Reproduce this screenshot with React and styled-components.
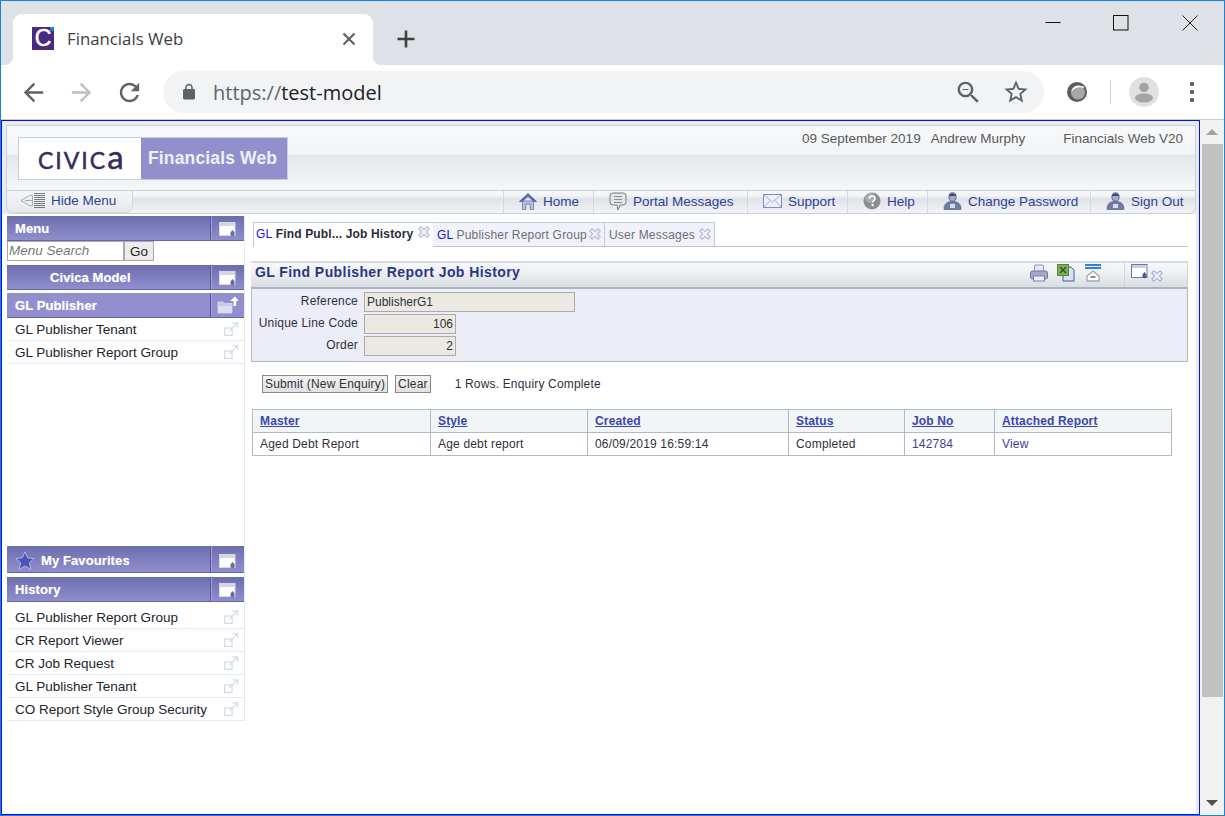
import React from "react";
import styled, { createGlobalStyle } from "styled-components";

const GlobalStyle = createGlobalStyle`
  html, body { margin: 0; padding: 0; background: #fff; }
  body { font-family: "Liberation Sans", Arial, sans-serif; overflow: hidden; }
  * { box-sizing: border-box; }
`;

const Frame = styled.div`
  width: 1225px;
  height: 816px;
  border: 1px solid #1a83d8;
  display: flex;
  flex-direction: column;
  overflow: hidden;
`;

/* browser chrome */
const TabStrip = styled.div`
  height: 64px;
  flex: none;
  background: #dee1e6;
  display: flex;
  padding-left: 12px;
`;

const BrowserTab = styled.div`
  position: relative;
  width: 360px;
  height: 51px;
  margin-top: 13px;
  background: #fff;
  border-radius: 9px 9px 0 0;
  display: flex;
  align-items: center;
  padding: 0 12px 2px 19px;
  &::before,
  &::after {
    content: "";
    position: absolute;
    bottom: 0;
    width: 9px;
    height: 9px;
  }
  &::before {
    left: -9px;
    background: radial-gradient(circle at 0 0, #dee1e6 9px, #fff 9.5px);
  }
  &::after {
    right: -9px;
    background: radial-gradient(circle at 100% 0, #dee1e6 9px, #fff 9.5px);
  }
`;

const Favicon = styled.span`
  position: relative;
  width: 22px;
  height: 23px;
  background: #4a2a80;
  color: #fff;
  font: 23px/23px "Liberation Sans", sans-serif;
  -webkit-text-stroke: 0.5px #fff;
  text-align: center;
  &::after {
    content: "";
    position: absolute;
    top: 0;
    right: 0;
    width: 4px;
    height: 4px;
    background: #1a83d8;
  }
`;

const TabTitle = styled.span`
  margin-left: 13px;
  font: 16.8px "Open Sans", sans-serif;
  color: #3c4043;
`;

const TabClose = styled.svg`
  margin-left: auto;
  width: 24px;
  height: 24px;
`;

const NewTab = styled.svg`
  width: 24px;
  height: 24px;
  margin: 26px 0 0 21px;
`;

const WindowControls = styled.div`
  margin-left: auto;
  display: flex;
  height: 44px;
`;

const WindowButton = styled.div`
  width: 68.5px;
  display: flex;
  align-items: center;
  justify-content: center;
`;

const Toolbar = styled.div`
  height: 55px;
  flex: none;
  background: #fff;
  border-bottom: 1px solid #ccc;
  padding: 0 7px 0 8px;
  display: flex;
  align-items: center;
`;

const ToolButton = styled.div`
  width: 48px;
  height: 36px;
  flex: none;
  display: flex;
  align-items: center;
  justify-content: center;
  margin-left: ${(props) => props.$gap || 0}px;
`;

const Address = styled.div`
  width: 881px;
  height: 42px;
  margin-left: 10px;
  border-radius: 21px;
  background: #f1f3f4;
  display: flex;
  align-items: center;
  padding: 0 4px 0 17px;
`;

const Url = styled.div`
  margin-left: 15px;
  font: 20px "Open Sans", sans-serif;
  color: #202124;
  flex: 1;
  span {
    color: #5f6368;
  }
`;

const ToolDivider = styled.div`
  width: 1px;
  height: 24px;
  background: #d3d5d8;
  margin-left: 9px;
`;

const Avatar = styled.div`
  width: 30px;
  height: 30px;
  border-radius: 50%;
  background: #e0e0e0;
  overflow: hidden;
  display: flex;
`;

/* page area */
const Viewport = styled.div`
  flex: 1;
  display: flex;
  min-height: 0;
`;

const Page = styled.div`
  width: 1199px;
  border: 1px solid #0a12e0;
  background: #e8ecf2;
  padding-right: 3px;
  display: flex;
`;

const Content = styled.div`
  flex: 1;
  background: #fff;
  display: flex;
  flex-direction: column;
`;

const Top = styled.div`
  background: #e8ecf2;
  padding: 4px 0 0 4px;
`;

const Banner = styled.div`
  height: 65px;
  border: 1px solid #c8d2dc;
  border-bottom: 0;
  background: linear-gradient(#f8f9fa 0, #f2f3f5 45%, #e3e6ea 46%, #f6f7f8 100%);
  display: flex;
  justify-content: space-between;
  padding: 11px 12px 0 11px;
`;

const LogoBox = styled.div`
  width: 270px;
  height: 43px;
  border: 1px solid #c5d0dc;
  display: flex;
`;

const LogoMark = styled.div`
  width: 122px;
  background: #fff;
  color: #3b2a5d;
  font: 400 33px/36px Lato, sans-serif;
  font-variant: small-caps;
  letter-spacing: 2px;
  padding-left: 19px;
  -webkit-text-stroke: 0.5px #3b2a5d;
  span {
    font-variant: normal;
  }
`;

const LogoName = styled.div`
  flex: 1;
  background: #9190cc;
  color: #f0f0fa;
  font: bold 17.5px/41px "Liberation Sans", sans-serif;
  letter-spacing: 0.15px;
  padding-left: 7px;
`;

const BannerInfo = styled.div`
  display: flex;
  font-size: 13.5px;
  color: #5a5a5a;
  height: 18px;
  margin-top: -6px;
  span + span {
    margin-left: 10px;
  }
  span:last-child {
    margin-left: 38px;
  }
`;

const NavBar = styled.div`
  height: 24px;
  border: 1px solid #c8d2dc;
  border-top-color: #c5d0dc;
  border-radius: 0 0 7px 7px;
  background: linear-gradient(#f6f7f8 0, #f4f5f7 20%, #dfe2e8 36%, #f2f4f7 100%);
  display: flex;
  justify-content: space-between;
  color: #2f3f95;
  font-size: 13.5px;
`;

const HideMenu = styled.div`
  width: 126px;
  border-right: 1px solid #cfd6de;
  border-bottom: 1px solid #cfd6de;
  border-radius: 0 0 8px 8px;
  background: linear-gradient(#f4f5f7, #e6e9ed);
  display: flex;
  align-items: center;
  padding: 0 0 2px 13px;
  gap: 5px;
`;

const NavLinks = styled.div`
  display: flex;
`;

const NavLink = styled.div`
  width: ${(props) => props.$w}px;
  display: flex;
  align-items: center;
  gap: 6px;
  border-left: 1px solid #d2d8e0;
  padding: 0 0 2px 15px;
`;

const Body = styled.div`
  flex: 1;
  display: flex;
  padding: 2px 8px 0 5px;
  gap: 6px;
  min-height: 0;
`;

const Sidebar = styled.div`
  width: 238px;
  height: 505px;
  border-right: 1px solid #e3e9ef;
  display: flex;
  flex-direction: column;
  flex: none;
`;

const SideHead = styled.div`
  height: ${(props) => props.$h || 25}px;
  flex: none;
  margin-top: ${(props) => props.$top || 0}px;
  background: ${(props) =>
    props.$flat ? "#918fce" : "linear-gradient(#6c6dad, #8f8fce)"};
  display: flex;
  align-items: stretch;
  border-bottom: 1px solid #6466a6;
  color: #fff;
  font-size: 13px;
  letter-spacing: 0.1px;
  font-weight: bold;
`;

const SideTitle = styled.div`
  flex: 1;
  display: flex;
  align-items: center;
  gap: 6px;
  padding-left: ${(props) => props.$left || 8}px;
  padding-top: ${(props) => props.$down || 1}px;
  text-shadow: 0 0 1px #ffffff80;
`;

const SideTool = styled.div`
  width: 34px;
  border-left: 1px solid #53559a;
  box-shadow: inset 1px 0 0 #a3a3d8;
  display: flex;
  align-items: flex-end;
  justify-content: center;
  padding-bottom: 3px;
`;

const SearchRow = styled.div`
  display: flex;
  height: 20px;
  flex: none;
`;

const SearchBox = styled.input`
  width: 117px;
  height: 20px;
  border: 1px solid #aaa;
  padding: 0 0 2px 1px;
  font: italic 13.5px "Liberation Sans", sans-serif;
  outline: none;
  &::placeholder {
    color: #777;
    opacity: 1;
  }
`;

const GoButton = styled.button`
  width: 30px;
  height: 20px;
  padding: 0;
  border: 1px solid #aaa;
  background: #ececec;
  font: 13.5px "Liberation Sans", sans-serif;
  color: #222;
`;

const SideRow = styled.div`
  height: 23px;
  flex: none;
  display: flex;
  align-items: center;
  justify-content: space-between;
  padding: 0 5px 0 8px;
  border-bottom: 1px solid #e3e9ef;
  font-size: 13.5px;
  color: #20242c;
  margin-top: ${(props) => props.$top || 0}px;
`;

const SideSpacer = styled.div`
  flex: 1;
`;

const Main = styled.div`
  flex: 1;
  padding-top: 6px;
  min-width: 0;
`;

const TabRow = styled.div`
  height: 25px;
  margin-left: 2px;
  border-bottom: 1px solid #bcc6d0;
  display: flex;
`;

const PageTab = styled.div`
  width: ${(props) => props.$w}px;
  height: ${(props) => (props.$active ? 25 : 24)}px;
  display: flex;
  align-items: center;
  justify-content: space-between;
  white-space: nowrap;
  padding: 0 3px ${(props) => (props.$active ? 2 : 0)}px ${(props) => (props.$active ? 2 : 4)}px;
  font-size: 12px;
  letter-spacing: ${(props) => (props.$active ? 0.15 : 0.2)}px;
  font-weight: ${(props) => (props.$active ? "bold" : "normal")};
  color: ${(props) => (props.$active ? "#2a2a3a" : "#6a6f7c")};
  background: ${(props) => (props.$active ? "#fff" : "#f1f2f9")};
  border: 1px solid #c2cad6;
  border-width: ${(props) => (props.$active ? "1px 0 0 1px" : "1px 1px 0 0")};
  b {
    font-weight: normal;
    color: #1414dc;
  }
  svg {
    margin-top: ${(props) => (props.$active ? -4 : -2)}px;
  }
`;

const PanelHead = styled.div`
  height: 28px;
  margin-top: 14px;
  border-top: 2px solid #d6dbdf;
  border-bottom: 2px solid #aab4be;
  border-right: 1px solid #ccd3da;
  background: linear-gradient(#f7f8f9, #eef0f2 40%, #d9dee2);
  display: flex;
  padding-left: 4px;
  color: #2a3585;
  font-size: 14px;
  line-height: 18px;
  letter-spacing: 0.42px;
  font-weight: bold;
`;

const PanelTools = styled.div`
  margin-left: auto;
  display: flex;
  align-items: flex-start;
  height: 100%;
`;

const PanelIcon = styled.div`
  width: 27px;
  margin-top: 1px;
  display: flex;
  justify-content: center;
`;

const PanelEnd = styled.div`
  margin-left: 18px;
  width: 63px;
  height: 100%;
  border-left: 1px solid #d0d6dc;
  display: flex;
  align-items: flex-start;
  padding: 1px 0 0 6px;
  gap: 3px;
  svg:last-child {
    margin-top: 6px;
  }
`;

const Form = styled.div`
  height: 73px;
  background: #ecedf7;
  border: 1px solid #b0bac6;
  border-top: 0;
  padding-top: 3px;
  display: grid;
  grid-template-columns: 106px 1fr;
  grid-auto-rows: 22px;
  column-gap: 6px;
  font-size: 12px;
  color: #30303a;
`;

const Label = styled.div`
  text-align: right;
  line-height: 19px;
  letter-spacing: 0.2px;
`;

const Field = styled.div`
  width: ${(props) => props.$w}px;
  height: 20px;
  background: #ebe9e2;
  border: 1px solid #aaa;
  line-height: 19px;
  padding: 0 2px;
  text-align: ${(props) => props.$align || "left"};
`;

const Actions = styled.div`
  margin: 13px 0 0 11px;
  height: 18px;
  display: flex;
  align-items: center;
  font-size: 12px;
  letter-spacing: 0.17px;
  color: #30303a;
`;

const FormButton = styled.button`
  height: 18px;
  padding: 0 2px;
  margin-right: 7px;
  border: 1px solid #888;
  background: linear-gradient(#f2f2f2, #e2e2e2);
  font: 12px "Liberation Sans", sans-serif;
  letter-spacing: 0.17px;
  color: #30303a;
`;

const Status = styled.span`
  margin-left: 17px;
`;

const Table = styled.table`
  margin: 16px 0 0 1px;
  width: 920px;
  table-layout: fixed;
  border-collapse: collapse;
  font-size: 12px;
  letter-spacing: 0.18px;
  color: #30303a;
`;

const Th = styled.th`
  height: 23px;
  padding: 0 7px;
  text-align: left;
  background: #f2f5f6;
  border: 1px solid #b0bac6;
  color: #3a45b4;
  text-decoration: underline;
  letter-spacing: 0.15px;
`;

const Td = styled.td`
  height: 23px;
  padding: 0 7px;
  border: 1px solid #b0bac6;
  color: ${(props) => (props.$link ? "#3d3d9e" : "inherit")};
`;

/* scrollbar */
const ScrollBar = styled.div`
  width: 24px;
  background: #f1f1f1;
  display: flex;
  flex-direction: column;
  align-items: center;
`;

const ScrollCap = styled.div`
  height: 24px;
  flex: none;
  display: flex;
  align-items: center;
  justify-content: center;
`;

const Arrow = styled.div`
  width: 0;
  height: 0;
  border-left: 6px solid transparent;
  border-right: 6px solid transparent;
  ${(props) =>
    props.$down
      ? "border-top: 6px solid #505050;"
      : "border-bottom: 6px solid #a3a3a3;"}
`;

const Thumb = styled.div`
  width: 21px;
  height: 553px;
  margin-left: 1px;
  background: #c1c1c1;
  flex: none;
`;

const ScrollRest = styled.div`
  flex: 1;
`;

/* drawn icons */
const WindowIcon = ({ light }) => (
  <svg width="17" height="15" viewBox="0 0 17 15">
    <rect x="0.5" y="0.5" width="15.5" height="13" fill="#fff" stroke={light ? "#6f76aa" : "#d6d6e8"} />
    <rect x="1" y="1" width="14.5" height="3" fill={light ? "#c9cde6" : "#d5d5dc"} />
    <circle cx="13.5" cy="12" r="2.2" fill={light ? "#4f5a95" : "#6b6f92"} />
    <path d="M13.5 8l2.200 2.400h-4.400z" fill={light ? "#4f5a95" : "#6b6f92"} />
  </svg>
);

const FolderIcon = () => (
  <svg width="22" height="18" viewBox="0 0 22 18">
    <path d="M1 6h5l1.5 1.5H15V17H1z" fill="#c6c9e6" stroke="#e0e1f3" strokeWidth="0.7" />
    <path d="M1 10h14v7H1z" fill="#dcdef0" />
    <path d="M13 5l5-4.5 3.5 4.500h-2.400v5h-2.600V5z" fill="#fff" />
  </svg>
);

const LinkOut = () => (
  <svg width="15" height="14" viewBox="0 0 15 14" fill="none" stroke="#d3dce6" strokeWidth="1.2">
    <rect x="0.6" y="6" width="7.5" height="7.4" />
    <path d="M5.5 9L13.5 1M8.5 0.8h5.2v5" />
  </svg>
);

const TabCross = ({ color = "#b5bad8" }) => (
  <svg width="12" height="12" viewBox="0 0 12 12">
    <path
      d="M3 .8L6 3.600 9 .8l2.200 2.200L8.400 6l2.800 3L9 11.200 6 8.400l-3 2.800L.8 9l2.800-3L.8 3z"
      fill="#eef0f8"
      stroke={color}
      strokeWidth="1.1"
    />
  </svg>
);

const HideIcon = () => (
  <svg width="26" height="17" viewBox="0 0 26 17" fill="none">
    <path d="M9.500 3.500L1 8.500 9.500 13.500H12.500V3.500z" fill="#eceef1" stroke="#a8acb0" />
    <path d="M5 8.500h7" stroke="#a8acb0" />
    <path d="M14 1.500h11M14 3.500h11M14 5.500h11M14 7.500h11M14 9.500h11M14 11.500h11M14 13.500h11M14 15.500h11" stroke="#77797e" />
  </svg>
);

const HomeIcon = () => (
  <svg width="18" height="17" viewBox="0 0 18 17">
    <path d="M3.500 8H14.500V16.500H11V11H7V16.500H3.500z" fill="#b4c0dc" stroke="#5a6ba5" strokeWidth="0.7" />
    <path d="M9 0.500L0.500 8.500H3L9 3.500 15 8.500H17.500z" fill="#5a6eb0" stroke="#44579a" strokeWidth="0.7" />
  </svg>
);

const MessageIcon = () => (
  <svg width="18" height="19" viewBox="0 0 18 19">
    <path d="M4 1h10a3 3 0 0 1 3 3v6a3 3 0 0 1-3 3h-3l-2 5-1-5H4a3 3 0 0 1-3-3V4a3 3 0 0 1 3-3z" fill="#e4e5e7" stroke="#777b80" />
    <path d="M5 4.500h8M5 7.500h8M5 10.500h8" stroke="#8a8e94" />
  </svg>
);

const MailIcon = () => (
  <svg width="19" height="14" viewBox="0 0 19 14">
    <rect x="0.500" y="0.500" width="18" height="13" fill="#eef0f8" stroke="#7f8cc0" />
    <path d="M1 1l8.500 7L18 1M1 13l6-6.500M18 13l-6-6.500" fill="none" stroke="#a5b0d4" />
  </svg>
);

const HelpIcon = () => (
  <svg width="18" height="18" viewBox="0 0 18 18">
    <circle cx="9" cy="9" r="8.500" fill="#8b8d91" />
    <circle cx="7" cy="6" r="5" fill="#aaacb0" />
    <path d="M6.300 6.800C6.300 5 7.600 4 9.200 4c1.700 0 2.800 1 2.800 2.400 0 2-2.300 2-2.300 4" fill="none" stroke="#fff" strokeWidth="1.700" />
    <circle cx="9.600" cy="13" r="1.200" fill="#fff" />
  </svg>
);

const PersonIcon = () => (
  <svg width="19" height="19" viewBox="0 0 19 19">
    <path d="M1 17.500c0-5 2-8 8.500-8s8.500 3 8.500 8z" fill="#6f7aa6" stroke="#4a5485" strokeWidth="0.600" />
    <ellipse cx="9.500" cy="5" rx="3.600" ry="4.300" fill="#a2acc8" stroke="#4a5485" strokeWidth="0.800" />
    <path d="M5.800 4C6.500 0.500 12.500 0.500 13.200 4z" fill="#3f4770" />
    <rect x="6.500" y="11.500" width="6" height="5" fill="#d7dbea" stroke="#4a5485" strokeWidth="0.500" />
  </svg>
);

const PrinterIcon = () => (
  <svg width="18" height="18" viewBox="0 0 18 18">
    <rect x="4.500" y="1" width="9" height="7" rx="1" fill="#e6e8f2" stroke="#8f94b8" />
    <rect x="0.500" y="7" width="17" height="8" rx="2" fill="#a3a8c8" stroke="#7479a8" />
    <rect x="3.500" y="12" width="11" height="5" fill="#eef0f8" stroke="#7c82ae" />
  </svg>
);

const ExcelIcon = () => (
  <svg width="18" height="18" viewBox="0 0 18 18">
    <path d="M6 3h8l3 3v11H6z" fill="#d8e2f2" stroke="#3c5f9e" />
    <rect x="0.500" y="0.500" width="11" height="11" fill="#7fae5e" stroke="#4d8a38" />
    <path d="M3 3l6 6M9 3L3 9" stroke="#2b5a20" strokeWidth="1.500" />
  </svg>
);

const CollapseIcon = () => (
  <svg width="16" height="18" viewBox="0 0 16 18">
    <path d="M0 1h16M0 4h16" stroke="#2d82d8" strokeWidth="2" />
    <path d="M8 7l6 5v5H2v-5z" fill="#fff" stroke="#a6a6a6" strokeWidth="1.300" />
    <path d="M5.500 13h5" stroke="#666" strokeWidth="1.500" />
  </svg>
);

const sideLinks = [
  "GL Publisher Report Group",
  "CR Report Viewer",
  "CR Job Request",
  "GL Publisher Tenant",
  "CO Report Style Group Security",
];

const columns = [
  { name: "Master", width: 178 },
  { name: "Style", width: 157 },
  { name: "Created", width: 201 },
  { name: "Status", width: 116 },
  { name: "Job No", width: 90 },
  { name: "Attached Report", width: 177 },
];

export default function App() {
  return (
    <>
      <GlobalStyle />
      <Frame>
        <TabStrip>
          <BrowserTab>
            <Favicon>C</Favicon>
            <TabTitle>Financials Web</TabTitle>
            <TabClose viewBox="0 0 24 24" fill="none" stroke="#5f6368" strokeWidth="2.200">
              <path d="M6.500 6.500l11 11M17.500 6.500l-11 11" />
            </TabClose>
          </BrowserTab>
          <NewTab viewBox="0 0 24 24" fill="none" stroke="#3c4043" strokeWidth="2.600">
            <path d="M12 3.500v17M3.500 12h17" />
          </NewTab>
          <WindowControls>
            <WindowButton>
              <svg width="16" height="16" viewBox="0 0 16 16" stroke="#111" fill="none">
                <path d="M0.500 7.500h15" />
              </svg>
            </WindowButton>
            <WindowButton>
              <svg width="16" height="16" viewBox="0 0 16 16" stroke="#111" fill="none">
                <rect x="0.500" y="0.500" width="14.500" height="14.500" />
              </svg>
            </WindowButton>
            <WindowButton>
              <svg width="16" height="16" viewBox="0 0 16 16" stroke="#222" fill="none">
                <path d="M0.500 0.500l15 15M15.500 0.500l-15 15" />
              </svg>
            </WindowButton>
          </WindowControls>
        </TabStrip>
        <Toolbar>
          <ToolButton>
            <svg width="29" height="29" viewBox="0 0 24 24" fill="#5f6368">
              <path d="M20 11H7.830l5.590-5.590L12 4l-8 8 8 8 1.410-1.410L7.830 13H20v-2z" />
            </svg>
          </ToolButton>
          <ToolButton>
            <svg width="29" height="29" viewBox="0 0 24 24" fill="#bdc1c6">
              <path d="M12 4l-1.410 1.410L16.170 11H4v2h12.170l-5.580 5.590L12 20l8-8z" />
            </svg>
          </ToolButton>
          <ToolButton>
            <svg width="29" height="29" viewBox="0 0 24 24" fill="#5f6368">
              <path d="M17.650 6.350C16.200 4.900 14.210 4 12 4c-4.420 0-7.990 3.580-7.990 8s3.570 8 7.990 8c3.730 0 6.840-2.550 7.730-6h-2.080c-.82 2.330-3.040 4-5.650 4-3.310 0-6-2.690-6-6s2.690-6 6-6c1.660 0 3.140.69 4.220 1.780L13 11h7V4l-2.350 2.350z" />
            </svg>
          </ToolButton>
          <Address>
            <svg width="18" height="18" viewBox="0 0 24 24" fill="#5f6368">
              <path d="M18 8h-1V6c0-2.760-2.240-5-5-5S7 3.240 7 6v2H6c-1.100 0-2 .9-2 2v10c0 1.100.9 2 2 2h12c1.100 0 2-.9 2-2V10c0-1.100-.9-2-2-2zM9 6c0-1.660 1.340-3 3-3s3 1.340 3 3v2H9V6z" />
            </svg>
            <Url>
              <span>https://</span>test-model
            </Url>
            <ToolButton>
              <svg width="29" height="29" viewBox="0 0 24 24" fill="#5f6368">
                <path d="M15.500 14h-.79l-.28-.27C15.410 12.590 16 11.110 16 9.500 16 5.910 13.090 3 9.500 3S3 5.910 3 9.500 5.910 16 9.500 16c1.610 0 3.090-.59 4.230-1.570l.27.28v.79l5 4.990L20.490 19l-4.990-5zm-6 0C7.010 14 5 11.990 5 9.500S7.010 5 9.500 5 14 7.010 14 9.500 11.990 14 9.500 14zM7 9h5v1H7z" />
              </svg>
            </ToolButton>
            <ToolButton>
              <svg width="28" height="28" viewBox="0 0 24 24" fill="#5f6368">
                <path d="M22 9.240l-7.190-.62L12 2 9.190 8.630 2 9.240l5.460 4.730L5.820 21 12 17.270 18.180 21l-1.630-7.030L22 9.240zM12 15.400l-3.760 2.270 1-4.280-3.320-2.880 4.380-.38L12 6.100l1.710 4.040 4.380.38-3.320 2.880 1 4.280L12 15.400z" />
              </svg>
            </ToolButton>
          </Address>
          <ToolButton $gap={9}>
            <svg width="22" height="22" viewBox="0 0 22 22">
              <circle cx="11" cy="11" r="10" fill="#5c5c5c" />
              <circle cx="12" cy="11.500" r="7" fill="#a8a8a8" />
              <path d="M6 9.500C7.500 5.500 12 3.500 18 6.500 14 4.800 9 6 6 9.500z" fill="#fff" stroke="#fff" />
            </svg>
          </ToolButton>
          <ToolDivider />
          <ToolButton $gap={9}>
            <Avatar>
              <svg width="30" height="30" viewBox="0 0 30 30" fill="#a3a3a3">
                <circle cx="15" cy="10.500" r="4.700" />
                <ellipse cx="15" cy="21" rx="9" ry="4.500" />
              </svg>
            </Avatar>
          </ToolButton>
          <ToolButton>
            <svg width="6" height="22" viewBox="0 0 6 22" fill="#5f6368">
              <circle cx="3" cy="3" r="2.200" />
              <circle cx="3" cy="11" r="2.200" />
              <circle cx="3" cy="19" r="2.200" />
            </svg>
          </ToolButton>
        </Toolbar>
        <Viewport>
          <Page>
            <Content>
              <Top>
                <Banner>
                  <LogoBox>
                    <LogoMark>
                      civic<span>a</span>
                    </LogoMark>
                    <LogoName>Financials Web</LogoName>
                  </LogoBox>
                  <BannerInfo>
                    <span>09 September 2019</span>
                    <span>Andrew Murphy</span>
                    <span>Financials Web V20</span>
                  </BannerInfo>
                </Banner>
                <NavBar>
                  <HideMenu>
                    <HideIcon />
                    Hide Menu
                  </HideMenu>
                  <NavLinks>
                    <NavLink $w={90}>
                      <HomeIcon />
                      Home
                    </NavLink>
                    <NavLink $w={154}>
                      <MessageIcon />
                      Portal Messages
                    </NavLink>
                    <NavLink $w={100}>
                      <MailIcon />
                      Support
                    </NavLink>
                    <NavLink $w={80}>
                      <HelpIcon />
                      Help
                    </NavLink>
                    <NavLink $w={163}>
                      <PersonIcon />
                      Change Password
                    </NavLink>
                    <NavLink $w={105}>
                      <PersonIcon />
                      Sign Out
                    </NavLink>
                  </NavLinks>
                </NavBar>
              </Top>
              <Body>
                <Sidebar>
                  <SideHead>
                    <SideTitle>Menu</SideTitle>
                    <SideTool>
                      <WindowIcon />
                    </SideTool>
                  </SideHead>
                  <SearchRow>
                    <SearchBox placeholder="Menu Search" />
                    <GoButton>Go</GoButton>
                  </SearchRow>
                  <SideHead $top={4}>
                    <SideTitle $left={43}>Civica Model</SideTitle>
                    <SideTool>
                      <WindowIcon />
                    </SideTool>
                  </SideHead>
                  <SideHead $top={3} $flat>
                    <SideTitle>GL Publisher</SideTitle>
                    <SideTool>
                      <FolderIcon />
                    </SideTool>
                  </SideHead>
                  <SideRow>
                    GL Publisher Tenant
                    <LinkOut />
                  </SideRow>
                  <SideRow>
                    GL Publisher Report Group
                    <LinkOut />
                  </SideRow>
                  <SideSpacer />
                  <SideHead $h={27}>
                    <SideTitle $down={2}>
                      <svg width="20" height="19" viewBox="0 0 20 19">
                        <path
                          d="M10 .8l2.800 6 6.400.7-4.800 4.300 1.400 6.400L10 15l-5.800 3.200 1.400-6.400L.8 7.500l6.400-.7z"
                          fill="#4a55b8"
                          stroke="#b4b6e2"
                        />
                      </svg>
                      My Favourites
                    </SideTitle>
                    <SideTool>
                      <WindowIcon />
                    </SideTool>
                  </SideHead>
                  <SideHead $top={4}>
                    <SideTitle>History</SideTitle>
                    <SideTool>
                      <WindowIcon />
                    </SideTool>
                  </SideHead>
                  {sideLinks.map((link, i) => (
                    <SideRow key={link} $top={i === 0 ? 4 : 0}>
                      {link}
                      <LinkOut />
                    </SideRow>
                  ))}
                </Sidebar>
                <Main>
                  <TabRow>
                    <PageTab $active $w={180}>
                      <span>
                        <b>GL</b> Find Publ... Job History
                      </span>
                      <TabCross />
                    </PageTab>
                    <PageTab $w={172}>
                      <span>
                        <b>GL</b> Publisher Report Group
                      </span>
                      <TabCross />
                    </PageTab>
                    <PageTab $w={110}>
                      <span>User Messages</span>
                      <TabCross />
                    </PageTab>
                  </TabRow>
                  <PanelHead>
                    GL Find Publisher Report Job History
                    <PanelTools>
                      <PanelIcon>
                        <PrinterIcon />
                      </PanelIcon>
                      <PanelIcon>
                        <ExcelIcon />
                      </PanelIcon>
                      <PanelIcon>
                        <CollapseIcon />
                      </PanelIcon>
                      <PanelEnd>
                        <WindowIcon light />
                        <TabCross color="#a9add0" />
                      </PanelEnd>
                    </PanelTools>
                  </PanelHead>
                  <Form>
                    <Label>Reference</Label>
                    <Field $w={211}>PublisherG1</Field>
                    <Label>Unique Line Code</Label>
                    <Field $w={92} $align="right">
                      106
                    </Field>
                    <Label>Order</Label>
                    <Field $w={92} $align="right">
                      2
                    </Field>
                  </Form>
                  <Actions>
                    <FormButton>Submit (New Enquiry)</FormButton>
                    <FormButton>Clear</FormButton>
                    <Status>1 Rows. Enquiry Complete</Status>
                  </Actions>
                  <Table>
                    <colgroup>
                      {columns.map((col) => (
                        <col key={col.name} width={col.width} />
                      ))}
                    </colgroup>
                    <thead>
                      <tr>
                        {columns.map((col) => (
                          <Th key={col.name}>{col.name}</Th>
                        ))}
                      </tr>
                    </thead>
                    <tbody>
                      <tr>
                        <Td>Aged Debt Report</Td>
                        <Td>Age debt report</Td>
                        <Td>06/09/2019 16:59:14</Td>
                        <Td>Completed</Td>
                        <Td $link>142784</Td>
                        <Td $link>View</Td>
                      </tr>
                    </tbody>
                  </Table>
                </Main>
              </Body>
            </Content>
          </Page>
          <ScrollBar>
            <ScrollCap>
              <Arrow />
            </ScrollCap>
            <Thumb />
            <ScrollRest />
            <ScrollCap>
              <Arrow $down />
            </ScrollCap>
          </ScrollBar>
        </Viewport>
      </Frame>
    </>
  );
}
